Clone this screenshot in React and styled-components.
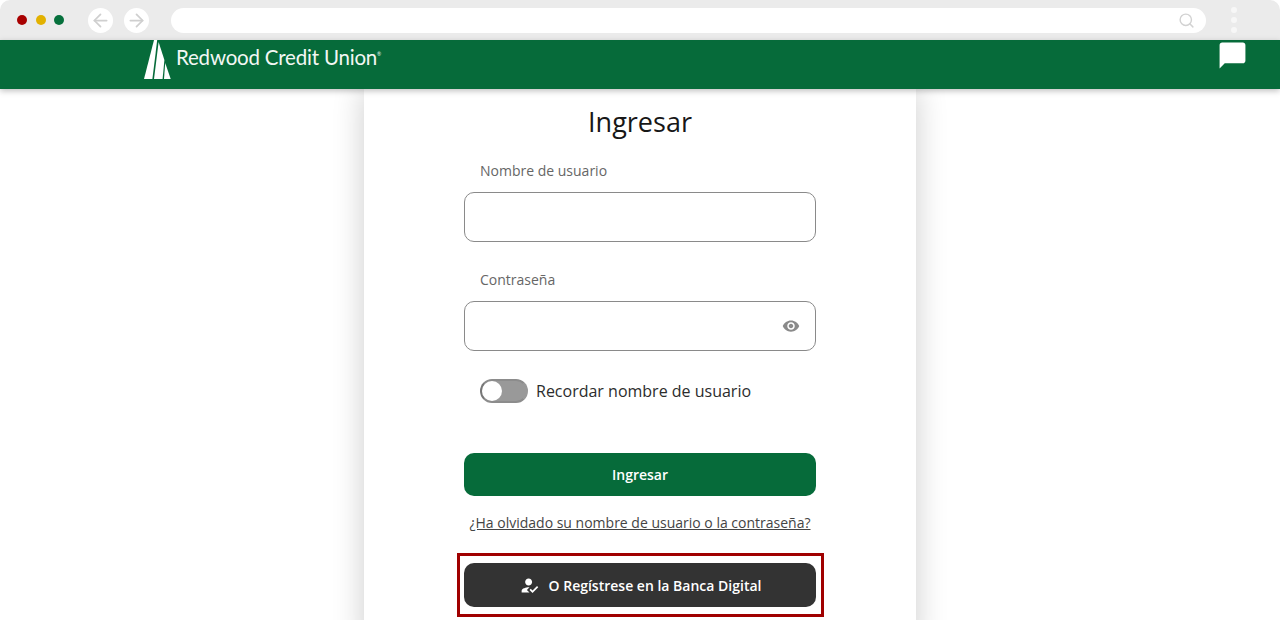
import React from 'react'
import styled, { createGlobalStyle } from 'styled-components'
import { MdHowToReg, MdVisibility, MdChatBubble } from 'react-icons/md'
import { FiSearch, FiArrowLeft, FiArrowRight } from 'react-icons/fi'

const Global = createGlobalStyle`
  html, body { margin: 0; padding: 0; height: 620px; overflow: hidden; background: #fff; }
  body { font-family: "Open Sans", "Liberation Sans", sans-serif; color: #1f1f1f; }
  * { box-sizing: border-box; }
`
const Page = styled.div`
  width: 1280px;
  height: 620px;
  overflow: hidden;
  display: flex;
  flex-direction: column;
`
const Chrome = styled.div`
  height: 40px;
  flex: none;
  background: #ebebeb;
  border-radius: 10px 10px 0 0;
  display: flex;
  align-items: center;
  padding: 0 0 0 17px;
`
const Lights = styled.div`
  display: flex;
  gap: 8.5px;
  margin-right: 24px;
`
const Light = styled.span`
  width: 10px;
  height: 10px;
  border-radius: 50%;
  background: ${({ $color }) => $color};
`
const NavButton = styled.span`
  width: 25px;
  height: 25px;
  border-radius: 50%;
  background: #fff;
  color: #cfcfcf;
  display: flex;
  align-items: center;
  justify-content: center;
  margin-right: 11px;
  font-size: 21px;
`
const AddressBar = styled.div`
  width: 1035px;
  height: 25px;
  margin-left: 11px;
  border-radius: 13px;
  background: #fff;
  color: #d2d2d2;
  display: flex;
  align-items: center;
  justify-content: flex-end;
  padding-right: 11px;
  font-size: 17px;
`
const Dots = styled.div`
  margin-left: 25px;
  display: flex;
  flex-direction: column;
  gap: 4px;
`
const Dot = styled.span`
  width: 6px;
  height: 6px;
  border-radius: 50%;
  background: #f7f7f7;
`
const Header = styled.header`
  height: 49px;
  flex: none;
  background: #066b3a;
  box-shadow: 0 2px 6px rgba(0, 0, 0, 0.25);
  position: relative;
  z-index: 2;
  display: flex;
  align-items: flex-start;
  justify-content: space-between;
  padding: 0 32px 0 144px;
`
const Logo = styled.div`
  display: flex;
  align-items: flex-start;
  gap: 5px;
  color: #f3f7f4;
`
const LogoName = styled.span`
  font-family: Lato, "Open Sans", sans-serif;
  font-size: 20.5px;
  line-height: 34px;
  letter-spacing: -0.2px;
  sup {
    font-size: 5px;
    line-height: 0;
    vertical-align: 9px;
  }
`
const ChatIcon = styled(MdChatBubble)`
  color: #fff;
  font-size: 31px;
`
const Main = styled.main`
  flex: 1;
  display: flex;
  justify-content: center;
`
const Card = styled.section`
  width: 552px;
  height: 560px;
  background: #fff;
  box-shadow: 0 0 30px rgba(0, 0, 0, 0.2);
  padding: 0 100px;
  display: flex;
  flex-direction: column;
`
const Title = styled.h1`
  margin: 14px 0 0;
  font-size: 27px;
  font-weight: 400;
  line-height: 38px;
  text-align: center;
  color: #171717;
`
const Label = styled.label`
  display: block;
  padding-left: 16px;
  margin-top: ${({ $first }) => ($first ? '20px' : '28px')};
  height: 20px;
  font-size: 14px;
  line-height: 20px;
  color: #666;
`
const Field = styled.div`
  margin-top: 11px;
  height: 50px;
  border: 1px solid #8a8a8a;
  border-radius: 10px;
  display: flex;
  align-items: center;
  justify-content: flex-end;
  padding-right: 15px;
  color: #8a8a8a;
  font-size: 18px;
`
const ToggleRow = styled.div`
  margin-top: 28px;
  padding-left: 16px;
  height: 24px;
  display: flex;
  align-items: center;
  gap: 8px;
  font-size: 16px;
  color: #2c2c2c;
`
const Track = styled.span`
  width: 48px;
  height: 24px;
  border-radius: 12px;
  background: #999;
  border: 2px solid #777;
  border-right-color: #999;
  border-top-color: #8c8c8c;
  border-bottom-color: #8c8c8c;
  display: flex;
  align-items: center;
`
const Thumb = styled.span`
  width: 20px;
  height: 20px;
  border-radius: 50%;
  background: #fff;
`
const PrimaryButton = styled.button`
  margin-top: 50px;
  width: 100%;
  height: 43px;
  border: 0;
  border-radius: 10px;
  background: #066b3a;
  color: #fff;
  font: 600 14px "Open Sans", sans-serif;
`
const Forgot = styled.a`
  margin-top: 17px;
  height: 20px;
  font-size: 14px;
  line-height: 20px;
  color: #444;
  text-align: center;
  text-decoration: underline;
`
const Highlight = styled.div`
  margin: 20px -8px 0 -7px;
  border: 3px solid #a00000;
  padding: 7px 5px 7px 4px;
`
const SecondaryButton = styled.button`
  width: 100%;
  height: 44px;
  border: 0;
  border-radius: 10px;
  background: #333;
  color: #fff;
  font: 600 14px "Open Sans", sans-serif;
  display: flex;
  align-items: center;
  justify-content: center;
  gap: 9px;
  svg { font-size: 21px; }
`

function TreeMark() {
  return (
    <svg width="27" height="39" viewBox="0 0 27 39" fill="#fff">
      <polygon points="10,0 13.2,0 8.4,39 0,39" />
      <polygon points="14.6,2 20.4,20 18.6,39 10,39" />
      <polygon points="21.2,23 26.7,39 20,39" />
    </svg>
  )
}

export default function App() {
  return (
    <Page>
      <Global />
      <Chrome>
        <Lights>
          <Light $color="#a80000" />
          <Light $color="#e2b100" />
          <Light $color="#06703c" />
        </Lights>
        <NavButton><FiArrowLeft /></NavButton>
        <NavButton><FiArrowRight /></NavButton>
        <AddressBar><FiSearch /></AddressBar>
        <Dots><Dot /><Dot /><Dot /></Dots>
      </Chrome>
      <Header>
        <Logo>
          <TreeMark />
          <LogoName>Redwood Credit Union<sup>®</sup></LogoName>
        </Logo>
        <ChatIcon />
      </Header>
      <Main>
        <Card>
          <Title>Ingresar</Title>
          <Label $first>Nombre de usuario</Label>
          <Field />
          <Label>Contraseña</Label>
          <Field><MdVisibility /></Field>
          <ToggleRow>
            <Track><Thumb /></Track>
            Recordar nombre de usuario
          </ToggleRow>
          <PrimaryButton>Ingresar</PrimaryButton>
          <Forgot>¿Ha olvidado su nombre de usuario o la contraseña?</Forgot>
          <Highlight>
            <SecondaryButton><MdHowToReg />O Regístrese en la Banca Digital</SecondaryButton>
          </Highlight>
        </Card>
      </Main>
    </Page>
  )
}
